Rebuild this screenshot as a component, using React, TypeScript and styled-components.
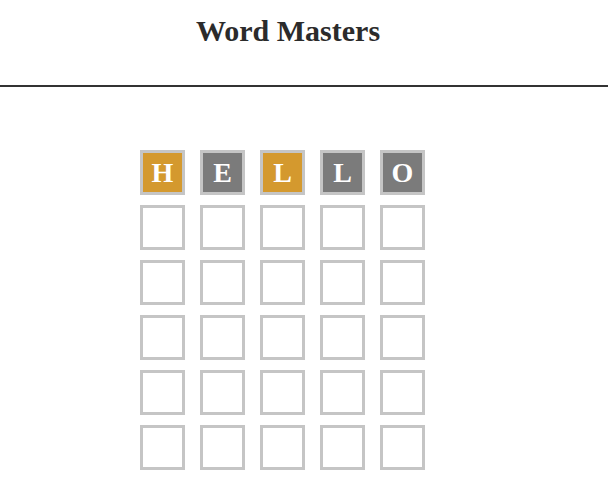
import React from "react";
import styled, { createGlobalStyle } from "styled-components";

const Global = createGlobalStyle`
  html, body { margin: 0; padding: 0; background: #fff; }
  body { font-family: "Liberation Serif", "Times New Roman", serif; color: #333; }
`;

const Header = styled.header`
  box-sizing: border-box;
  height: 87px;
  padding: 14px 32px 0 0;
  border-bottom: 2px solid #333;
  text-align: center;
`;

const Title = styled.h1`
  margin: 0;
  font-size: 30px;
  font-weight: bold;
  line-height: normal;
  color: #2b2b2b;
`;

const Board = styled.main`
  display: grid;
  grid-template-columns: repeat(5, 45px);
  column-gap: 15px;
  row-gap: 10px;
  padding: 63px 0 0 140px;
`;

type Status = "empty" | "close" | "wrong" | "correct";

const bg: Record<Status, string> = {
  empty: "#fff",
  close: "#d4992e",
  wrong: "#7b7b7b",
  correct: "#3a9a3a",
};

const Tile = styled.div<{ $status: Status }>`
  box-sizing: border-box;
  width: 45px;
  height: 45px;
  border: 3px solid #c5c5c5;
  background: ${(p) => bg[p.$status]};
  color: #fff;
  display: flex;
  align-items: center;
  justify-content: center;
  font-size: 28px;
  font-weight: bold;
  text-transform: uppercase;
  line-height: 1;
`;

const guess: { l: string; s: Status }[] = [
  { l: "h", s: "close" },
  { l: "e", s: "wrong" },
  { l: "l", s: "close" },
  { l: "l", s: "wrong" },
  { l: "o", s: "wrong" },
];

export default function App() {
  const tiles: React.ReactNode[] = [];
  for (let r = 0; r < 6; r++) {
    for (let c = 0; c < 5; c++) {
      const g = r === 0 ? guess[c] : null;
      tiles.push(
        <Tile key={`${r}-${c}`} $status={g ? g.s : "empty"}>
          {g ? g.l : ""}
        </Tile>
      );
    }
  }
  return (
    <>
      <Global />
      <Header>
        <Title>Word Masters</Title>
      </Header>
      <Board>{tiles}</Board>
    </>
  );
}
